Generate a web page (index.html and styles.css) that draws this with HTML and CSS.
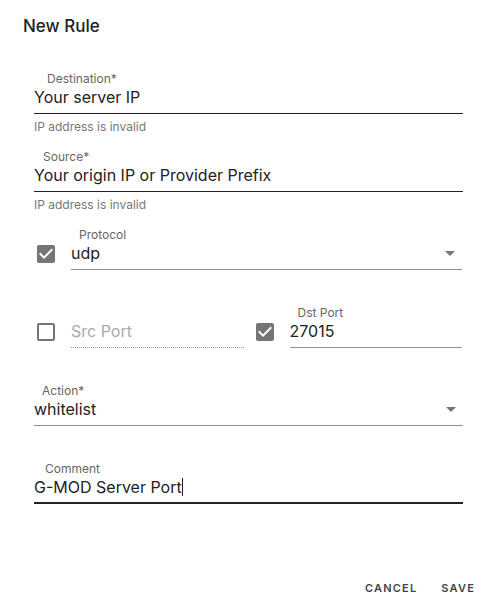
FILE: index.html
```html
<!DOCTYPE html>
<html lang="en">
<head>
  <meta charset="UTF-8">
  <meta name="viewport" content="width=device-width, initial-scale=1.0">
  <title>New Rule</title>
  <link rel="stylesheet" href="styles.css">
</head>
<body>

  <div class="dialog">
    <h2 class="dialog-title">New Rule</h2>

    <form class="dialog-content" id="rule-form">
      <div class="field">
        <label class="field-label label-dest" for="destination">Destination*</label>
        <div class="field-control">
          <input type="text" id="destination" value="Your server IP">
        </div>
        <div class="field-helper">IP address is invalid</div>
      </div>

      <div class="field">
        <label class="field-label label-src" for="source">Source*</label>
        <div class="field-control">
          <input type="text" id="source" value="Your origin IP or Provider Prefix">
        </div>
        <div class="field-helper">IP address is invalid</div>
      </div>

      <div class="check-row">
        <span class="checkbox">
          <svg width="18" height="18" viewBox="3 3 18 18"><path d="M19 3H5c-1.11 0-2 .9-2 2v14c0 1.1.89 2 2 2h14c1.11 0 2-.9 2-2V5c0-1.1-.89-2-2-2zm-9 14l-5-5 1.41-1.41L10 14.17l7.59-7.59L19 8l-9 9z"/></svg>
        </span>
        <div class="field">
          <label class="field-label label-select">Protocol</label>
          <div class="field-control select">
            <span class="select-value">udp</span>
            <svg class="select-arrow" width="10" height="5" viewBox="0 0 10 5"><path d="M0 0h10L5 5z"/></svg>
          </div>
          <div class="field-helper"></div>
        </div>
      </div>

      <div class="port-row">
        <div class="check-row">
          <span class="checkbox">
            <svg width="18" height="18" viewBox="3 3 18 18"><path d="M19 5v14H5V5h14m0-2H5c-1.1 0-2 .9-2 2v14c0 1.1.9 2 2 2h14c1.1 0 2-.9 2-2V5c0-1.1-.9-2-2-2z"/></svg>
          </span>
          <div class="field">
            <label class="field-label"></label>
            <div class="field-control disabled">
              <input type="text" placeholder="Src Port" disabled>
            </div>
            <div class="field-helper"></div>
          </div>
        </div>
        <div class="check-row">
          <span class="checkbox">
            <svg width="18" height="18" viewBox="3 3 18 18"><path d="M19 3H5c-1.11 0-2 .9-2 2v14c0 1.1.89 2 2 2h14c1.11 0 2-.9 2-2V5c0-1.1-.89-2-2-2zm-9 14l-5-5 1.41-1.41L10 14.17l7.59-7.59L19 8l-9 9z"/></svg>
          </span>
          <div class="field">
            <label class="field-label label-select" for="dst-port">Dst Port</label>
            <div class="field-control soft">
              <input type="text" id="dst-port" value="27015">
            </div>
            <div class="field-helper"></div>
          </div>
        </div>
      </div>

      <div class="field">
        <label class="field-label label-action">Action*</label>
        <div class="field-control select">
          <span class="select-value">whitelist</span>
          <svg class="select-arrow" width="10" height="5" viewBox="0 0 10 5"><path d="M0 0h10L5 5z"/></svg>
        </div>
        <div class="field-helper"></div>
      </div>

      <div class="field">
        <label class="field-label label-comment" for="comment">Comment</label>
        <div class="field-control focused">
          <span class="typed">G-MOD Server Port</span><span class="caret"></span>
        </div>
        <div class="field-helper"></div>
      </div>
    </form>

    <div class="dialog-actions">
      <button type="button" class="btn">Cancel</button>
      <button type="submit" class="btn" form="rule-form">Save</button>
    </div>
  </div>

</body>
</html>
```

FILE: styles.css
```css
body {
  font-family: Inter, "DejaVu Sans", sans-serif;
  margin: 0;
  padding: 0;
  background-color: white;
  color: #222;
}
.dialog {
  width: 498px;
  height: 611px;
  display: flex;
  flex-direction: column;
  box-sizing: border-box;
}
.dialog-title {
  margin: 0;
  padding: 15px 23px 0;
  font-size: 17px;
  line-height: 22px;
  font-weight: 500;
  color: #222;
}
.dialog-content {
  margin-top: 35px;
  padding: 0 35px 0 34px;
  display: flex;
  flex-direction: column;
}
.field {
  height: 78px;
  display: flex;
  flex-direction: column;
  flex: none;
  min-width: 0;
}
.field-label {
  font-size: 12px;
  font-style: normal;
  line-height: 14px;
  height: 14px;
  color: #666;
  padding-left: 8px;
}
.label-dest {
  padding-left: 13px;
}
.label-src {
  padding-left: 9px;
}
.label-comment {
  padding-left: 11px;
}
.field-control {
  display: flex;
  align-items: center;
  height: 22px;
  padding-bottom: 5px;
  border-bottom: 1px solid #222;
  font-size: 16px;
}
.field-control input {
  font: inherit;
  color: #222;
  border: none;
  outline: none;
  padding: 0;
  background: none;
  width: 100%;
}
.field-control input::placeholder {
  color: #aaa;
  opacity: 1;
}
.field-control.select,
.field-control.soft {
  border-bottom-color: #8f8f8f;
}
.field-control.disabled {
  border-bottom: 1px dotted #999;
}
.field-control.focused {
  padding-bottom: 4px;
  border-bottom: 2px solid #222;
}
.select-value {
  flex: 1;
}
.select-arrow {
  fill: #757575;
  margin-right: 7px;
}
.caret {
  display: inline-block;
  width: 1px;
  height: 18px;
  background-color: #222;
}
.field-helper {
  margin-top: 6px;
  font-size: 12px;
  line-height: 14px;
  color: #777;
}
.check-row {
  display: flex;
  flex: 1;
}
.check-row .field {
  flex: 1;
  margin-right: 1px;
}
.checkbox {
  margin: 17px 16px 0 3px;
  width: 18px;
  height: 18px;
  fill: #757575;
}
.checkbox svg {
  display: block;
}
.port-row {
  display: flex;
  gap: 8px;
}
.dialog-actions {
  margin-top: auto;
  display: flex;
  justify-content: flex-end;
  gap: 8px;
  padding: 0 15px 5px;
}
.btn {
  font-family: inherit;
  font-size: 11px;
  font-weight: 600;
  letter-spacing: 1.2px;
  text-transform: uppercase;
  color: #444;
  background: none;
  border: none;
  padding: 6px 8px;
  line-height: 24px;
  cursor: pointer;
}
```
